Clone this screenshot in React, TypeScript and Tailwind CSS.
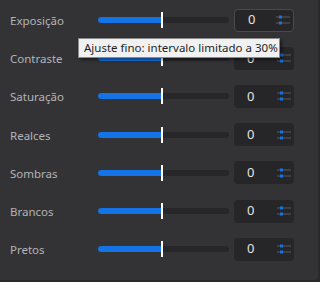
const ROWS = ["Exposição", "Contraste", "Saturação", "Realces", "Sombras", "Brancos", "Pretos"];

function StepIcon() {
  return (
    <svg width="14" height="10" viewBox="0 0 14 10" className="shrink-0">
      <rect x="0" y="1.5" width="3" height="1" fill="#5a5a5e" />
      <rect x="6" y="1.5" width="8" height="1" fill="#5a5a5e" />
      <rect x="3" y="0.5" width="3" height="3" fill="#1473e6" />
      <rect x="0" y="7.5" width="3" height="1" fill="#5a5a5e" />
      <rect x="6" y="7.5" width="8" height="1" fill="#5a5a5e" />
      <rect x="3" y="6.5" width="3" height="3" fill="#1473e6" />
    </svg>
  );
}

function Row({ label, focused }: { label: string; focused?: boolean }) {
  return (
    <div className="flex h-[38.2px] items-center">
      <div className="w-[98px] pl-[10px] pt-[1px] text-[11.5px] text-[#b4b4b6]">{label}</div>
      <div className="relative h-[6px] w-[131px] rounded-full bg-[#27272a]">
        <div className="h-full w-[64px] rounded-l-full bg-[#1473e6]" />
        <div className="absolute left-[63px] top-[-5px] h-[16px] w-[2px] bg-white" />
      </div>
      <div
        className={`ml-[5px] flex h-[23px] w-[60px] items-center rounded-[4px] bg-[#262628] pl-[13px] pr-[3px] ${
          focused ? "border border-[#4a4a4e]" : ""
        }`}
      >
        <span className="flex-1 text-[13px] text-[#e4e4e4]">0</span>
        <StepIcon />
      </div>
    </div>
  );
}

export default function App() {
  return (
    <div
      className="relative h-[282px] w-[320px] overflow-hidden bg-[#2a2a2d]"
      style={{ fontFamily: "'Noto Sans', 'Open Sans', sans-serif" }}
    >
      <div className="h-[280px] w-[318px] rounded-br-[4px] bg-[#333336] pt-[1px]">
        {ROWS.map((r, i) => (
          <Row key={r} label={r} focused={i === 0} />
        ))}
      </div>
      <div className="absolute left-[78px] top-[38px] flex h-[20px] w-[202px] items-center border border-[#8a8a8a] bg-[#f1f1f1] pl-[5px] text-[11.5px] text-[#1e1e1e] shadow-[2px_2px_3px_rgba(0,0,0,0.45)]">
        Ajuste fino: intervalo limitado a 30%
      </div>
    </div>
  );
}
